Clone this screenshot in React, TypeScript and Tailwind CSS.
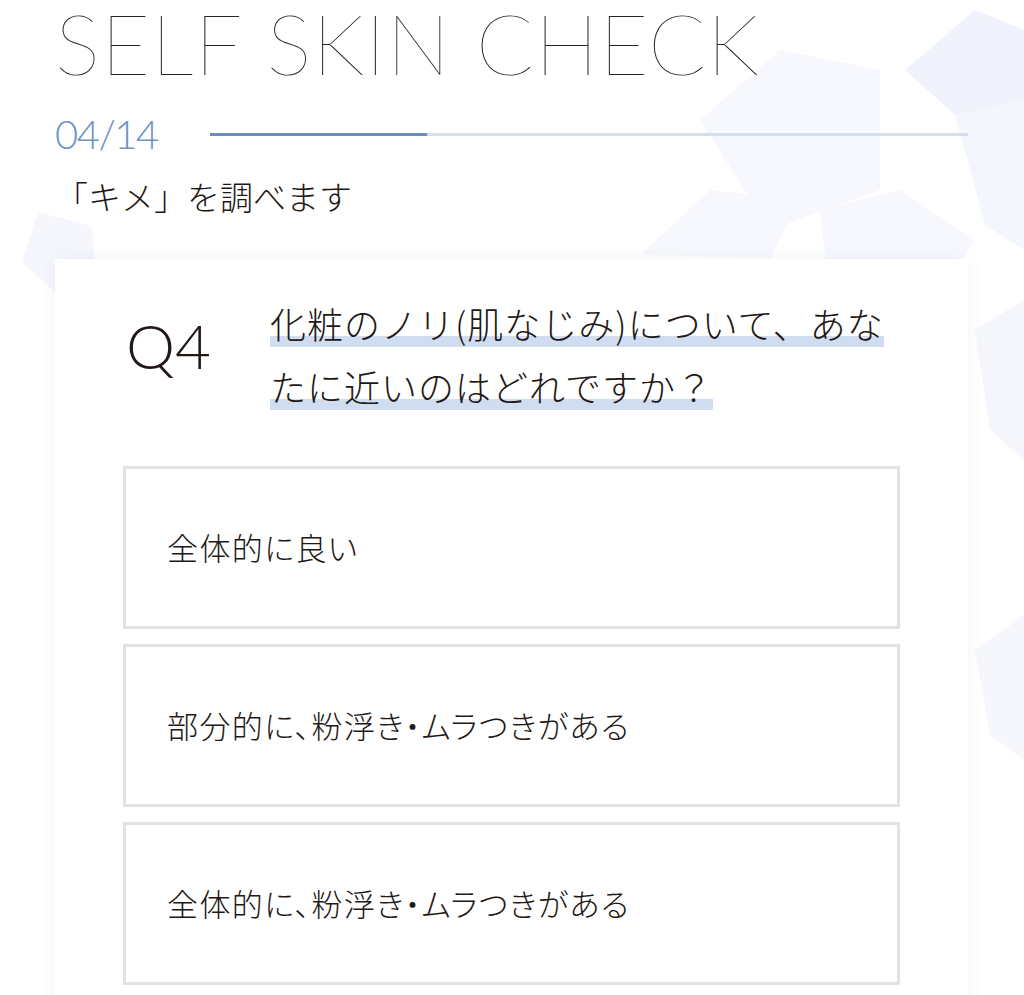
import React from "react";

const jp = { fontFamily: '"Noto Sans CJK JP", "Noto Sans", sans-serif' };
const lat = { fontFamily: 'Lato, "Noto Sans", sans-serif' };

function Bg() {
  return (
    <svg className="absolute inset-0 pointer-events-none" width="1024" height="995" viewBox="0 0 1024 995">
      <polygon points="700,120 780,50 880,70 880,190 770,230" fill="#f7f8fd" />
      <polygon points="905,70 975,10 1024,30 1024,130 955,115" fill="#f0f3fb" />
      <polygon points="820,210 900,190 975,240 920,320 830,300" fill="#f6f8fd" />
      <polygon points="955,115 1024,100 1024,250 985,225" fill="#f3f6fc" />
      <polygon points="640,255 710,190 800,200 770,258" fill="#f7f8fd" />
      <polygon points="975,330 1024,300 1024,460 990,430" fill="#f4f6fc" />
      <polygon points="975,650 1024,615 1024,760 990,735" fill="#f6f7fc" />
      <polygon points="38,212 92,226 98,300 55,292 22,262" fill="#f5f7fd" />
    </svg>
  );
}

export default function App() {
  const options = [
    "全体的に良い",
    "部分的に、粉浮き・ムラつきがある",
    "全体的に、粉浮き・ムラつきがある",
  ];
  return (
    <div className="relative w-[1024px] h-[995px] overflow-hidden bg-white">
      <Bg />
      <div className="relative pl-[55px]">
        <h1
          className="text-[85px] leading-[102px] font-extralight text-[#2b2525] tracking-[0.8px] -mt-[9px]"
          style={lat}
        >
          SELF SKIN CHECK
        </h1>
        <div className="flex items-center mt-[21px] w-[913px]">
          <span
            className="text-[40px] leading-none font-light text-[#6c93c6] w-[155px] tracking-[-1.5px]"
            style={lat}
          >
            04/14
          </span>
          <div className="flex-1 flex h-[3px]">
            <div className="w-[217px] bg-[#6a8fc1]" />
            <div className="flex-1 bg-[#d3deee]" />
          </div>
        </div>
        <p className="mt-[26px] text-[33px] leading-none text-[#221815] font-light" style={jp}>
          「キメ」を調べます
        </p>
        <div className="mt-[46px] w-[913px] bg-white shadow-[0_0_18px_rgba(40,60,110,0.06)] px-[68px] pt-[33px] pb-[40px]">
          <div className="flex">
            <div
              className="w-[147px] pl-[3px] pt-[22px] text-[62px] leading-none font-light text-[#221815]"
              style={lat}
            >
              Q4
            </div>
            <p
              className="flex-1 text-[36px] leading-[63px] text-[#221815] font-light tracking-[1px]"
              style={jp}
            >
              <span className="[box-decoration-break:clone] bg-[linear-gradient(transparent_75%,#d0ddf0_75%,#d0ddf0_96%,transparent_96%)]">
                化粧のノリ(肌なじみ)について、あなたに近いのはどれですか？
              </span>
            </p>
          </div>
          <div className="mt-[48px] flex flex-col gap-[15px]">
            {options.map((o) => (
              <div
                key={o}
                className="h-[163px] border-[3px] border-[#e2e2e2] flex items-center pl-[41px] text-[31px] text-[#221815] font-light tracking-[1.4px] [font-feature-settings:'palt']"
                style={jp}
              >
                {o}
              </div>
            ))}
          </div>
        </div>
      </div>
    </div>
  );
}
